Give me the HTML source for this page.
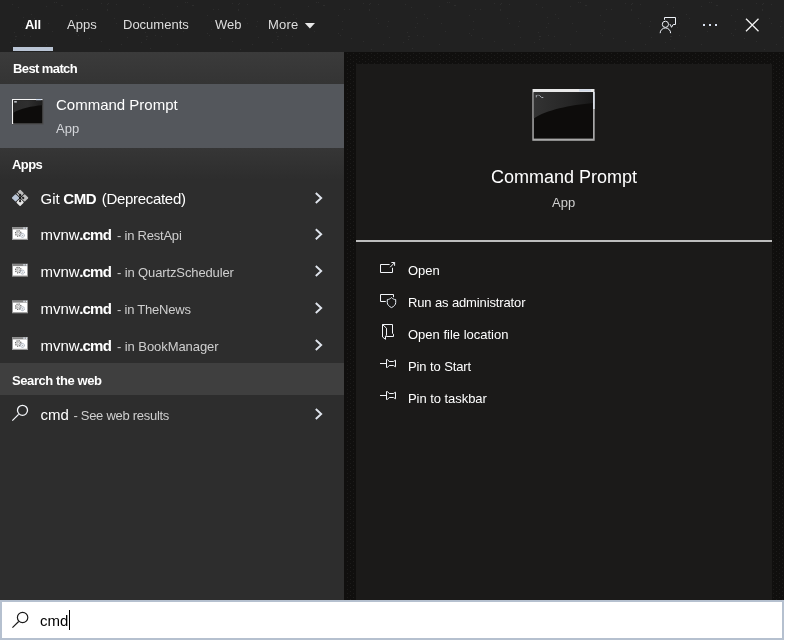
<!DOCTYPE html>
<html lang="en">
<head>
<meta charset="utf-8">
<title>Search</title>
<style>
html,body{margin:0;padding:0;}
body{width:790px;height:640px;background:#ffffff;overflow:hidden;position:relative;
  font-family:"Liberation Sans",sans-serif;color:#ffffff;}
.abs{position:absolute;}
.t{position:absolute;white-space:nowrap;line-height:1;will-change:transform;}
.t i{font-style:normal;position:absolute;top:0;}
#win{left:0;top:0;width:784px;height:640px;background:#100f0e;overflow:hidden;}
#hdr{left:0;top:0;width:784px;height:52px;background:#212121;}
#left{left:0;top:52px;width:344px;height:548px;background:#2d2d2d;}
#bm{left:0;top:52px;width:344px;height:32px;background:linear-gradient(#3b3b3b,#343434);}
#sel{left:0;top:84px;width:344px;height:64px;background:#54575c;}
#ah{left:0;top:148px;width:344px;height:32px;background:linear-gradient(#363636,#2d2d2d);}
#sw{left:0;top:363px;width:344px;height:32px;background:#3f3f3f;}
#right{left:356px;top:64px;width:416px;height:536px;background:#1b1a19;}
#div{left:356px;top:240px;width:416px;height:2px;background:#bdbdbd;}
#sb{left:0;top:600px;width:780px;height:36px;background:#ffffff;border:2px solid #b5c0cf;}
#ul{left:13px;top:47px;width:40px;height:4px;background:#b9c4d4;}
#cur{left:69px;top:610px;width:1px;height:20px;background:#000;}
.tab{font-size:13px;top:18px;color:#dedede;}
.hd{font-size:13px;font-weight:bold;color:#ffffff;}
.it{font-size:15px;color:#ffffff;height:15px;}
.it b{font-weight:bold;}
.it .s{font-size:13px;color:#cfcfcf;top:1.7px;}
.act{font-size:13px;color:#ffffff;left:408px;}
svg{position:absolute;left:0;top:0;overflow:visible;}
</style>
</head>
<body>
<div id="win" class="abs">
  <div id="hdr" class="abs"></div>
  <svg width="784" height="640" viewBox="0 0 784 640">
    <defs><pattern id="dots" width="6" height="4" patternUnits="userSpaceOnUse"><rect x="5" y="1" width="1" height="1" fill="#1d1c1b"/><rect x="2" y="3" width="1" height="1" fill="#1d1c1b"/></pattern><pattern id="noise" width="131" height="52" patternUnits="userSpaceOnUse"><g fill="#2d2d2d"><rect x="82" y="9" width="1" height="1"/><rect x="101" y="41" width="1" height="1"/><rect x="12" y="4" width="1" height="1"/><rect x="24" y="23" width="1" height="1"/><rect x="14" y="32" width="1" height="1"/><rect x="54" y="2" width="1" height="1"/><rect x="22" y="27" width="1" height="1"/><rect x="107" y="4" width="1" height="1"/><rect x="61" y="5" width="1" height="1"/><rect x="108" y="3" width="1" height="1"/><rect x="31" y="14" width="1" height="1"/><rect x="15" y="36" width="1" height="1"/><rect x="101" y="3" width="1" height="1"/><rect x="56" y="2" width="1" height="1"/><rect x="34" y="18" width="1" height="1"/><rect x="107" y="9" width="1" height="1"/><rect x="30" y="36" width="1" height="1"/><rect x="78" y="35" width="1" height="1"/><rect x="46" y="6" width="1" height="1"/><rect x="48" y="23" width="1" height="1"/><rect x="24" y="35" width="1" height="1"/><rect x="16" y="36" width="1" height="1"/><rect x="15" y="39" width="1" height="1"/><rect x="52" y="31" width="1" height="1"/><rect x="109" y="49" width="1" height="1"/><rect x="80" y="29" width="1" height="1"/><rect x="116" y="23" width="1" height="1"/><rect x="76" y="15" width="1" height="1"/><rect x="46" y="44" width="1" height="1"/><rect x="62" y="5" width="1" height="1"/><rect x="76" y="33" width="1" height="1"/><rect x="126" y="21" width="1" height="1"/><rect x="114" y="18" width="1" height="1"/><rect x="18" y="7" width="1" height="1"/><rect x="107" y="10" width="1" height="1"/><rect x="87" y="9" width="1" height="1"/><rect x="125" y="26" width="1" height="1"/><rect x="10" y="42" width="1" height="1"/><rect x="19" y="48" width="1" height="1"/><rect x="80" y="21" width="1" height="1"/><rect x="89" y="38" width="1" height="1"/><rect x="127" y="37" width="1" height="1"/><rect x="116" y="4" width="1" height="1"/><rect x="23" y="17" width="1" height="1"/><rect x="121" y="44" width="1" height="1"/></g></pattern></defs>
    <rect x="345" y="52" width="438" height="548" fill="url(#dots)"/>
    <rect x="0" y="0" width="784" height="52" fill="url(#noise)"/>
  </svg>
  <div id="left" class="abs"></div>
  <div id="bm" class="abs"></div>
  <div id="sel" class="abs"></div>
  <div id="ah" class="abs"></div>
  <div id="sw" class="abs"></div>
  <div id="right" class="abs"></div>
  <div id="div" class="abs"></div>
  <div id="ul" class="abs"></div>

  <div class="t tab" style="left:25px;color:#fff;font-weight:bold;letter-spacing:-0.3px;">All</div>
  <div class="t tab" style="left:67px;">Apps</div>
  <div class="t tab" style="left:122.5px;">Documents</div>
  <div class="t tab" style="left:215px;">Web</div>
  <div class="t tab" style="left:268px;letter-spacing:0.2px;">More</div>

  <div class="t hd" style="left:12.5px;top:62px;letter-spacing:-0.6px;">Best match</div>
  <div class="t it" style="left:56px;top:97px;">Command Prompt</div>
  <div class="t" style="left:56px;top:122px;font-size:13px;color:#d4d6da;">App</div>

  <div class="t hd" style="left:12px;top:158px;letter-spacing:-0.6px;">Apps</div>
  <div class="t it" style="left:40px;top:191px;"><i style="left:0.5px;">Git</i> <i style="left:23.3px;letter-spacing:-0.4px;"><b>CMD</b></i> <i style="left:61.7px;letter-spacing:-0.3px;">(Deprecated)</i></div>
  <div class="t it" style="left:40px;top:227px;"><i style="left:0.5px;">mvnw</i> <i style="left:39.2px;letter-spacing:-0.8px;"><b>.cmd</b></i> <i class="s" style="left:77px;letter-spacing:-0.22px;">- in RestApi</i></div>
  <div class="t it" style="left:40px;top:264px;"><i style="left:0.5px;">mvnw</i> <i style="left:39.2px;letter-spacing:-0.8px;"><b>.cmd</b></i> <i class="s" style="left:77px;letter-spacing:-0.12px;">- in QuartzScheduler</i></div>
  <div class="t it" style="left:40px;top:301px;"><i style="left:0.5px;">mvnw</i> <i style="left:39.2px;letter-spacing:-0.8px;"><b>.cmd</b></i> <i class="s" style="left:77px;letter-spacing:-0.22px;">- in TheNews</i></div>
  <div class="t it" style="left:40px;top:338px;"><i style="left:0.5px;">mvnw</i> <i style="left:39.2px;letter-spacing:-0.8px;"><b>.cmd</b></i> <i class="s" style="left:77px;letter-spacing:-0.07px;">- in BookManager</i></div>

  <div class="t hd" style="left:12px;top:374px;letter-spacing:-0.41px;">Search the web</div>
  <div class="t it" style="left:40px;top:407px;"><i style="left:0.5px;">cmd</i> <i class="s" style="left:33.4px;letter-spacing:-0.28px;">- See web results</i></div>

  <div class="t" style="left:491px;top:167.6px;font-size:18px;">Command Prompt</div>
  <div class="t" style="left:552px;top:196px;font-size:13px;color:#cfcfcf;">App</div>

  <div class="t act" style="top:264px;">Open</div>
  <div class="t act" style="top:296px;letter-spacing:-0.13px;">Run as administrator</div>
  <div class="t act" style="top:328px;">Open file location</div>
  <div class="t act" style="top:360px;letter-spacing:-0.1px;">Pin to Start</div>
  <div class="t act" style="top:392px;letter-spacing:-0.05px;">Pin to taskbar</div>

  <div id="sb" class="abs"></div>
  <div class="t" style="left:40px;top:613px;font-size:15px;color:#000;">cmd</div>
  <div id="cur" class="abs"></div>

  <svg width="784" height="640" viewBox="0 0 784 640">
    <!-- header: dropdown triangle, feedback, dots, close -->
    <path d="M304.8 23 H315 L309.9 28.4 Z" fill="#e8e8e8"/>
    <g fill="none" stroke="#eef2f8" stroke-width="1">
      <path d="M664.5 19.8 V17.5 H675.5 V24.5 H673.2 L671.5 27.3 L670.3 24.5 H669.7"/>
      <circle cx="665.4" cy="24.3" r="3.1"/>
      <path d="M660.15 33.2 A5.25 5.25 0 0 1 670.65 33.2"/>
    </g>
    <g fill="#dbe3f2"><rect x="703" y="24" width="2" height="2"/><rect x="709" y="24" width="2" height="2"/><rect x="715" y="24" width="2" height="2"/></g>
    <path d="M746 18.8 L758.5 31.3 M758.5 18.8 L746 31.3" fill="none" stroke="#f2f2f2" stroke-width="1.3"/>

    <!-- small cmd icon -->
    <g>
      <rect x="12" y="99" width="31.5" height="25.5" fill="#4a4a4a"/>
      <rect x="12" y="99" width="30.5" height="1.2" fill="#f4f4f4"/>
      <rect x="12" y="99" width="1.2" height="25" fill="#f4f4f4"/>
      <rect x="13.2" y="100.2" width="29" height="23" fill="#0d0c0b"/>
      <path d="M13.2 100.2 H42.2 V105.2 C32 106 20 108.2 13.2 113 Z" fill="url(#gs)"/>
      <rect x="14.2" y="101.2" width="2.6" height="1.3" fill="#e4e8f0"/>
      <rect x="36" y="99" width="5.5" height="1.2" fill="#c9d6ea"/>
    </g>

    <!-- git icon -->
    <g transform="translate(20.1 197.9) rotate(45)">
      <rect x="-6" y="-6" width="12" height="12" rx="0.8" fill="#1d1d1d"/>
      <rect x="-6" y="-6" width="5.6" height="5.6" rx="0.8" fill="#bdbdbd"/>
      <rect x="0.4" y="-6" width="5.6" height="5.6" rx="0.8" fill="#c0c0c0"/>
      <rect x="0.4" y="0.4" width="5.6" height="5.6" rx="0.8" fill="#e6e6e6"/>
      <rect x="-6" y="0.4" width="5.6" height="5.6" rx="0.8" fill="#b9c5d6"/>
    </g>
    <g fill="#141414" stroke="#141414" stroke-width="0.9">
      <path d="M16.9 191.7 L20.1 194.9 L23.3 198 M20.1 194.9 V201.2" fill="none"/>
      <circle cx="20.1" cy="194.9" r="0.7"/><circle cx="20.1" cy="198" r="0.8"/><circle cx="20.1" cy="201.2" r="0.7"/><circle cx="23.3" cy="198" r="0.7"/>
    </g>

    <!-- cmd file icons -->
    <g transform="translate(12 227)">
      <rect x="0" y="0" width="16" height="13" fill="#9a9a9a"/>
      <rect x="0.5" y="0.5" width="15" height="1.7" fill="#848484"/>
      <rect x="11.4" y="0.4" width="1.3" height="1.5" fill="#e4ecf6"/><rect x="13.7" y="0.4" width="1.3" height="1.5" fill="#e4ecf6"/>
      <rect x="1" y="2.4" width="14" height="9.4" fill="#ffffff"/>
      <circle cx="6.3" cy="6.4" r="2.8" fill="#dcdcdc" stroke="#5c5c5c" stroke-width="1.1" stroke-dasharray="1.1 1.1"/>
      <circle cx="6.3" cy="6.4" r="1.1" fill="#f2f2f2" stroke="#777777" stroke-width="0.7" stroke-dasharray="0.8 0.8"/>
      <circle cx="10.5" cy="8.4" r="2" fill="#eef1f5" stroke="#7f8b9c" stroke-width="0.9" stroke-dasharray="1 0.9"/>
      <circle cx="10.5" cy="8.4" r="0.7" fill="#b4b4b4"/>
    </g>
    <g transform="translate(12 263.7)">
      <rect x="0" y="0" width="16" height="13" fill="#9a9a9a"/>
      <rect x="0.5" y="0.5" width="15" height="1.7" fill="#848484"/>
      <rect x="11.4" y="0.4" width="1.3" height="1.5" fill="#e4ecf6"/><rect x="13.7" y="0.4" width="1.3" height="1.5" fill="#e4ecf6"/>
      <rect x="1" y="2.4" width="14" height="9.4" fill="#ffffff"/>
      <circle cx="6.3" cy="6.4" r="2.8" fill="#dcdcdc" stroke="#5c5c5c" stroke-width="1.1" stroke-dasharray="1.1 1.1"/>
      <circle cx="6.3" cy="6.4" r="1.1" fill="#f2f2f2" stroke="#777777" stroke-width="0.7" stroke-dasharray="0.8 0.8"/>
      <circle cx="10.5" cy="8.4" r="2" fill="#eef1f5" stroke="#7f8b9c" stroke-width="0.9" stroke-dasharray="1 0.9"/>
      <circle cx="10.5" cy="8.4" r="0.7" fill="#b4b4b4"/>
    </g>
    <g transform="translate(12 300.3)">
      <rect x="0" y="0" width="16" height="13" fill="#9a9a9a"/>
      <rect x="0.5" y="0.5" width="15" height="1.7" fill="#848484"/>
      <rect x="11.4" y="0.4" width="1.3" height="1.5" fill="#e4ecf6"/><rect x="13.7" y="0.4" width="1.3" height="1.5" fill="#e4ecf6"/>
      <rect x="1" y="2.4" width="14" height="9.4" fill="#ffffff"/>
      <circle cx="6.3" cy="6.4" r="2.8" fill="#dcdcdc" stroke="#5c5c5c" stroke-width="1.1" stroke-dasharray="1.1 1.1"/>
      <circle cx="6.3" cy="6.4" r="1.1" fill="#f2f2f2" stroke="#777777" stroke-width="0.7" stroke-dasharray="0.8 0.8"/>
      <circle cx="10.5" cy="8.4" r="2" fill="#eef1f5" stroke="#7f8b9c" stroke-width="0.9" stroke-dasharray="1 0.9"/>
      <circle cx="10.5" cy="8.4" r="0.7" fill="#b4b4b4"/>
    </g>
    <g transform="translate(12 337)">
      <rect x="0" y="0" width="16" height="13" fill="#9a9a9a"/>
      <rect x="0.5" y="0.5" width="15" height="1.7" fill="#848484"/>
      <rect x="11.4" y="0.4" width="1.3" height="1.5" fill="#e4ecf6"/><rect x="13.7" y="0.4" width="1.3" height="1.5" fill="#e4ecf6"/>
      <rect x="1" y="2.4" width="14" height="9.4" fill="#ffffff"/>
      <circle cx="6.3" cy="6.4" r="2.8" fill="#dcdcdc" stroke="#5c5c5c" stroke-width="1.1" stroke-dasharray="1.1 1.1"/>
      <circle cx="6.3" cy="6.4" r="1.1" fill="#f2f2f2" stroke="#777777" stroke-width="0.7" stroke-dasharray="0.8 0.8"/>
      <circle cx="10.5" cy="8.4" r="2" fill="#eef1f5" stroke="#7f8b9c" stroke-width="0.9" stroke-dasharray="1 0.9"/>
      <circle cx="10.5" cy="8.4" r="0.7" fill="#b4b4b4"/>
    </g>

    <!-- search icon (list) -->
    <g fill="none" stroke="#f4f6fa" stroke-width="1.3">
      <circle cx="22.5" cy="410.3" r="5"/>
      <path d="M18.6 414.4 L12.3 420.6"/>
    </g>

    <!-- chevrons -->
    <path d="M315.8 193.0 L321.2 198.0 L315.8 203.0" fill="none" stroke="#dfe4ec" stroke-width="1.9"/>
    <path d="M315.8 229.3 L321.2 234.3 L315.8 239.3" fill="none" stroke="#dfe4ec" stroke-width="1.9"/>
    <path d="M315.8 266.0 L321.2 271.0 L315.8 276.0" fill="none" stroke="#dfe4ec" stroke-width="1.9"/>
    <path d="M315.8 303.0 L321.2 308.0 L315.8 313.0" fill="none" stroke="#dfe4ec" stroke-width="1.9"/>
    <path d="M315.8 340.0 L321.2 345.0 L315.8 350.0" fill="none" stroke="#dfe4ec" stroke-width="1.9"/>
    <path d="M315.8 409.0 L321.2 414.0 L315.8 419.0" fill="none" stroke="#dfe4ec" stroke-width="1.9"/>

    <!-- big cmd icon -->
    <g>
      <rect x="532.3" y="89" width="62.4" height="51.8" fill="#a8a8a8"/>
      <rect x="533" y="89" width="61" height="3.2" fill="#e9e9e9"/>
      <rect x="579" y="89.4" width="12" height="2" fill="#cfd8e6"/>
      <rect x="593" y="92" width="1.7" height="17" fill="#d8dde6"/>
      <rect x="533.8" y="92.2" width="59.2" height="46.4" fill="#0d0c0b"/>
      <path d="M533.8 92.2 H593 V103 C570 105 546 110 533.8 118.5 Z" fill="url(#gl)"/>
      <path d="M536.3 95 V97.4 M537.5 95.3 H538.5 M539.3 95.2 L541.3 97.3 M541.5 97.5 H543.3" stroke="#c8ccd4" stroke-width="0.8" fill="none"/>
    </g>
    <defs><linearGradient id="gs" x1="0" y1="0" x2="1" y2="0"><stop offset="0" stop-color="#2b2b2b"/><stop offset="0.5" stop-color="#2f2f2f"/><stop offset="1" stop-color="#1e1e1e"/></linearGradient><linearGradient id="gl" x1="0" y1="0" x2="1" y2="0"><stop offset="0" stop-color="#333333"/><stop offset="0.6" stop-color="#262626"/><stop offset="1" stop-color="#181818"/></linearGradient></defs>

    <!-- action icons -->
    <g fill="none" stroke="#f2f4f8" stroke-width="1">
      <path d="M389.6 264.5 H380.5 V272.5 H392.5 V267.8"/>
      <path d="M390.2 267.2 L394.6 262.6 M391.4 262.5 H394.6 V265.8"/>
      <path d="M393.5 297.2 V294.5 H380.5 V301.5 H385.8"/>
      <path d="M391.5 297.6 C390.2 298.9 388.8 299.5 387.3 299.6 V302.6 C387.3 304.8 389 306.4 391.5 307.6 C394 306.4 395.7 304.8 395.7 302.6 V299.6 C394.2 299.5 392.8 298.9 391.5 297.6 Z" stroke="#eaf0f8"/>
      <path d="M382.5 324.5 H392.5 V333.4 L393.5 334.2 V336.5 H386.2"/>
      <path d="M382.5 324.5 V337 L385.5 339.3 V336.2 L386.5 335.2 V328.2 Z"/>
    </g>
    <g transform="translate(0 0)" fill="none" stroke="#f2f4f8" stroke-width="1">
      <path d="M380 363.5 H386.5"/>
      <path d="M386.5 359.5 H387.4 L389.2 361.5 H393.4 L395.5 360.2 V366.8 L393.4 365.5 H389.2 L387.4 367.5 H386.5 Z"/>
    </g>
    <g transform="translate(0 32)" fill="none" stroke="#f2f4f8" stroke-width="1">
      <path d="M380 363.5 H386.5"/>
      <path d="M386.5 359.5 H387.4 L389.2 361.5 H393.4 L395.5 360.2 V366.8 L393.4 365.5 H389.2 L387.4 367.5 H386.5 Z"/>
    </g>

    <!-- search icon (box) -->
    <g fill="none" stroke="#1a1a1a" stroke-width="1.2">
      <circle cx="22.6" cy="617.5" r="5.2"/>
      <path d="M18.7 621.5 L12.4 627.6"/>
    </g>
  </svg>
</div>
</body>
</html>
